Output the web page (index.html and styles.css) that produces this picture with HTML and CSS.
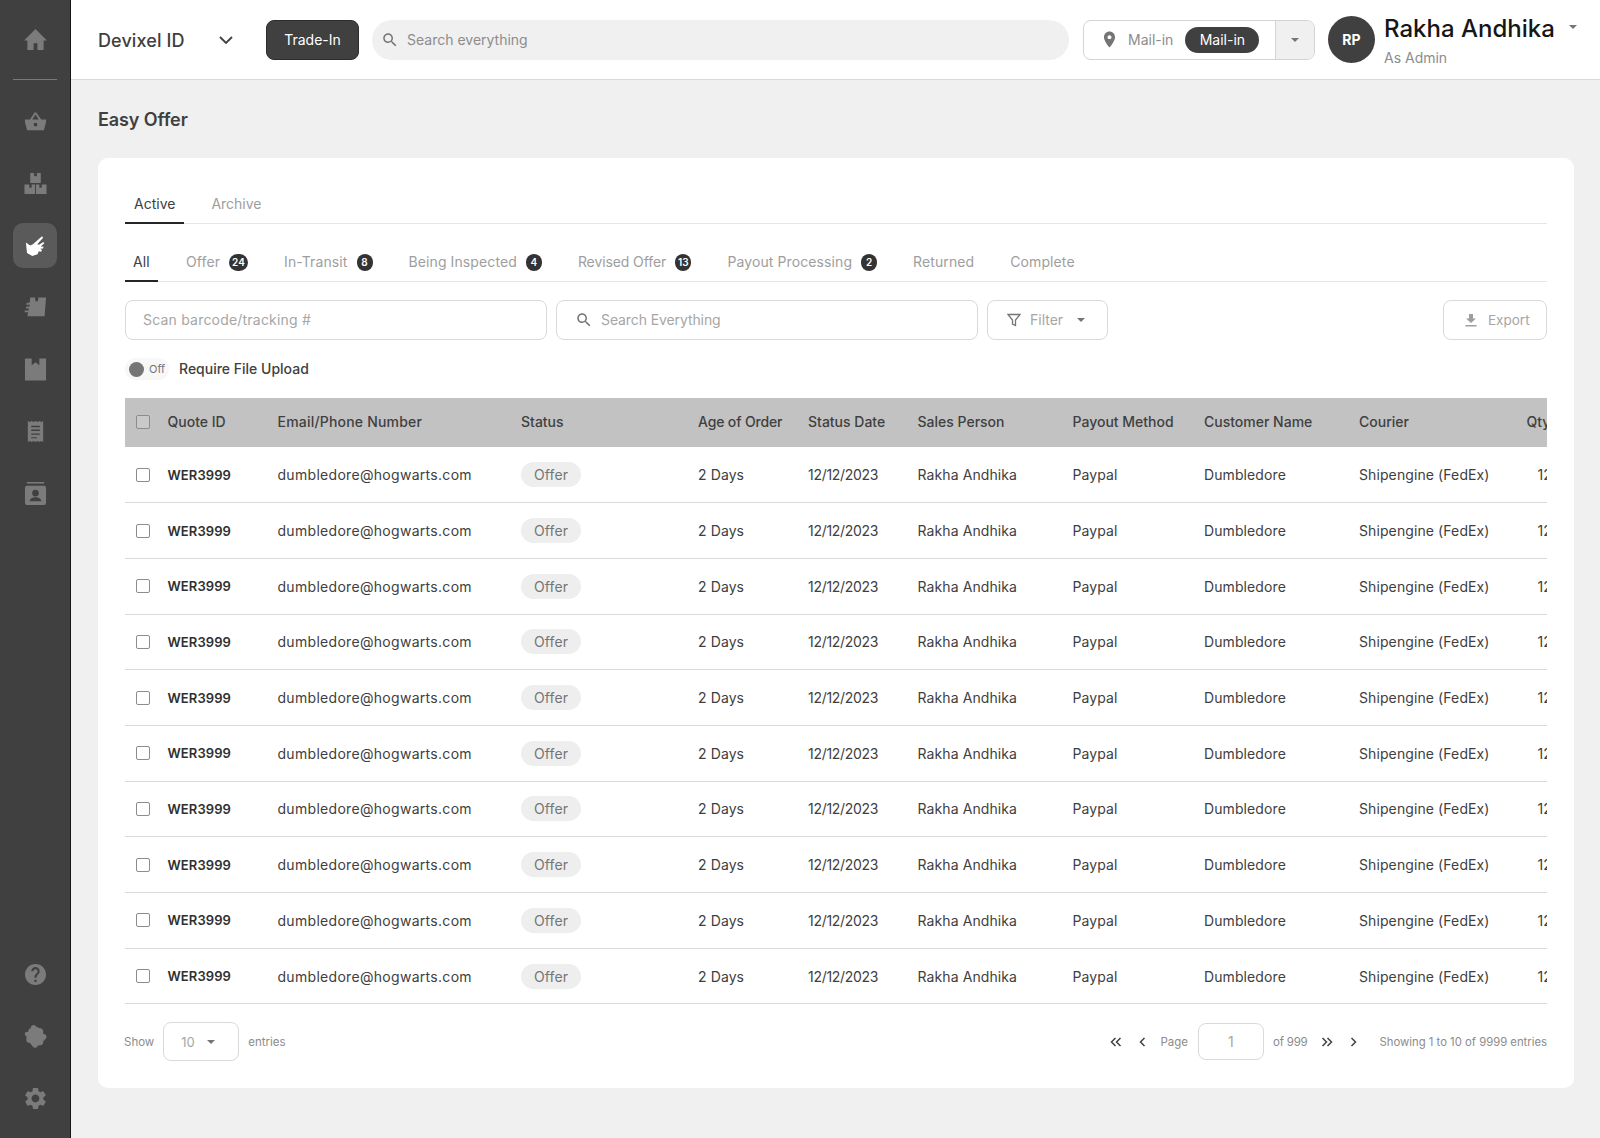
FILE: index.html
```html
<!DOCTYPE html>
<html lang="en">
<head>
    <meta charset="UTF-8">
    <meta name="viewport" content="width=device-width, initial-scale=1.0">
    <title>Easy Offer</title>
    <link rel="stylesheet" href="styles.css">
</head>
<body>
    <div class="shell">
        <!-- Sidebar -->
        <aside class="sidebar">
            <div class="home-item">
                <svg class="nav-icon" viewBox="0 0 24 24"><path d="M10 23v-7h4v7h6.500v-10H24L12 1 0 13h3.500v10z"/></svg>
            </div>
            <nav class="nav-main">
                <a class="nav-item"><svg class="nav-icon" viewBox="0 0 24 24"><path d="M1 10h5.200L11 2.500l1.800 0L18 10h5v2.500l-2.200 8.500H3.200L1 12.500zM8.600 10h6.800L12 4.600zM12 13.200a2 2 0 1 0 0 4 2 2 0 0 0 0-4z"/></svg></a>
                <a class="nav-item"><svg class="nav-icon" viewBox="0 0 24 24"><path d="M6.500 1h4v3.500h3V1h4v10.500h-11zM.5 13h5v3.500h2.500V13h3.500v10H.5zM12.500 13h3.500v3.500h2.500V13h5v10h-11z"/></svg></a>
                <a class="nav-item active"><svg class="nav-icon hand" viewBox="0 0 24 24"><path d="M1 8.500l5 3.500 3-1.500L19.500 1.500l1.200 1.500-6.700 7.500 2 .5 5-3 1 1.500-4 3.500 3.200.5-.5 1.800-3.200.5 2 1.500-1.200 1.700-2.500-.5-1.500 3.500-6 2-6-3.500z"/></svg></a>
                <a class="nav-item"><svg class="nav-icon" viewBox="0 0 24 24"><path d="M6.500 1.500h5l.5 4h2.500l.5-4h8L21.500 21H3.500l.8-4H.5l.4-2h3.800l.4-2H2l.4-2h3.300l.4-2H2.500l.4-2h3z"/></svg></a>
                <a class="nav-item"><svg class="nav-icon" viewBox="0 0 24 24"><path d="M1 .5h7v7l4-3 4 3v-7h7v23H1z"/></svg></a>
                <a class="nav-item"><svg class="nav-icon" viewBox="0 0 24 24"><path fill-rule="evenodd" d="M4 1l2 1 2-1 2 1 2-1 2 1 2-1 2 1 2-1v22l-2-1-2 1-2-1-2 1-2-1-2 1-2-1-2 1zM7.500 6v1.500h9V6zM7.500 10v1.500h9V10zM7.500 14v1.500h9V14zM7.500 18v1h6v-1z"/></svg></a>
                <a class="nav-item"><svg class="nav-icon" viewBox="0 0 24 24"><path fill-rule="evenodd" d="M3 0h18v1.500H3zM3 4h18a2 2 0 0 1 2 2v16a2 2 0 0 1-2 2H3a2 2 0 0 1-2-2V6a2 2 0 0 1 2-2zm9 4a3.500 3.500 0 1 0 0 7 3.500 3.500 0 0 0 0-7zm-6 12h12c0-2.500-3-4-6-4s-6 1.500-6 4z"/></svg></a>
            </nav>
            <nav class="nav-bottom">
                <a class="nav-item"><svg class="nav-icon" viewBox="0 0 24 24"><path transform="translate(-1.200 -1.200) scale(1.100)" d="M12 2C6.480 2 2 6.480 2 12s4.480 10 10 10 10-4.480 10-10S17.520 2 12 2zm1 17h-2v-2h2v2zm2.070-7.750l-.9.920C13.450 12.900 13 13.500 13 15h-2v-.5c0-1.100.45-2.100 1.170-2.830l1.240-1.260c.37-.36.59-.86.59-1.410 0-1.100-.9-2-2-2s-2 .9-2 2H8c0-2.210 1.790-4 4-4s4 1.790 4 4c0 .88-.36 1.680-.93 2.250z"/></svg></a>
                <a class="nav-item"><svg class="nav-icon" viewBox="0 0 24 24"><path d="M7 3.500a3 3 0 0 1 5.500-2l4 2a3 3 0 0 1 3.500 3.500v2.500a3 3 0 0 1 3 4.500l-3 3a3 3 0 0 1-2.500 4l-3 .5a3 3 0 0 1-5 1.500L6 18.500a3 3 0 0 1-3.500-3.500v-3a3 3 0 0 1-1-4.500L4.500 7a3 3 0 0 1 2.500-3.500z"/></svg></a>
                <a class="nav-item"><svg class="nav-icon" viewBox="0 0 24 24"><path transform="translate(-1.700 -1.700) scale(1.140)" d="M19.140 12.940c.04-.3.06-.61.06-.94 0-.32-.02-.64-.07-.94l2.030-1.580c.18-.14.23-.41.12-.61l-1.920-3.320c-.12-.22-.37-.29-.59-.22l-2.390.96c-.5-.38-1.030-.7-1.620-.94l-.36-2.540c-.04-.24-.24-.41-.48-.41h-3.840c-.24 0-.43.17-.47.41l-.36 2.540c-.59.24-1.130.57-1.620.94l-2.390-.96c-.22-.08-.47 0-.59.22L2.740 8.870c-.12.21-.08.47.12.61l2.030 1.580c-.05.3-.09.63-.09.94s.02.64.07.94l-2.030 1.580c-.18.14-.23.41-.12.61l1.920 3.320c.12.22.37.29.59.22l2.390-.96c.5.38 1.030.7 1.620.94l.36 2.540c.05.24.24.41.48.41h3.840c.24 0 .44-.17.47-.41l.36-2.540c.59-.24 1.130-.56 1.620-.94l2.390.96c.22.08.47 0 .59-.22l1.920-3.320c.12-.22.07-.47-.12-.61l-2.010-1.580zM12 15.600c-1.980 0-3.600-1.620-3.600-3.600s1.620-3.600 3.600-3.600 3.600 1.620 3.600 3.600-1.620 3.600-3.600 3.600z"/></svg></a>
            </nav>
        </aside>

        <div class="content">
            <!-- Top bar -->
            <header class="topbar">
                <div class="org-select">
                    <span>Devixel ID</span>
                    <svg class="chevron" viewBox="0 0 14 8"><path d="M1 1l6 6 6-6"/></svg>
                </div>
                <button class="trade-btn">Trade-In</button>
                <div class="global-search">
                    <svg class="search-icon" viewBox="0 0 24 24"><path d="M15.500 14h-.79l-.28-.27C15.410 12.590 16 11.110 16 9.500 16 5.910 13.090 3 9.500 3S3 5.910 3 9.500 5.910 16 9.500 16c1.610 0 3.090-.59 4.230-1.570l.27.28v.79l5 4.990L20.490 19l-4.990-5zm-6 0C7.010 14 5 11.990 5 9.500S7.010 5 9.500 5 14 7.010 14 9.500 11.990 14 9.500 14z"/></svg>
                    <span>Search everything</span>
                </div>
                <div class="mail-select">
                    <div class="mail-main">
                        <svg class="pin" viewBox="0 0 24 24"><path d="M12 2C8.130 2 5 5.130 5 9c0 5.250 7 13 7 13s7-7.750 7-13c0-3.870-3.130-7-7-7zm0 9.500c-1.380 0-2.500-1.120-2.500-2.500s1.120-2.500 2.500-2.500 2.500 1.120 2.500 2.500-1.120 2.500-2.500 2.500z"/></svg>
                        <span class="mail-label">Mail-in</span>
                        <span class="mail-pill">Mail-in</span>
                    </div>
                    <div class="mail-caret"><i class="caret"></i></div>
                </div>
                <div class="avatar">RP</div>
                <div class="user">
                    <div class="user-name">Rakha Andhika</div>
                    <div class="user-role">As Admin</div>
                </div>
                <i class="caret user-caret"></i>
            </header>

            <main class="page">
                <h1 class="page-title">Easy Offer</h1>

                <section class="card">
                    <div class="tabs">
                        <a class="tab active">Active</a>
                        <a class="tab">Archive</a>
                    </div>

                    <div class="subtabs">
                        <a class="subtab active">All</a>
                        <a class="subtab">Offer <span class="count">24</span></a>
                        <a class="subtab">In-Transit <span class="count">8</span></a>
                        <a class="subtab">Being Inspected <span class="count">4</span></a>
                        <a class="subtab">Revised Offer <span class="count">13</span></a>
                        <a class="subtab">Payout Processing <span class="count">2</span></a>
                        <a class="subtab">Returned</a>
                        <a class="subtab">Complete</a>
                    </div>

                    <div class="filters">
                        <div class="field scan">Scan barcode/tracking #</div>
                        <div class="field with-icon">
                            <svg class="search-icon" viewBox="0 0 24 24"><path d="M15.500 14h-.79l-.28-.27C15.410 12.590 16 11.110 16 9.500 16 5.910 13.090 3 9.500 3S3 5.910 3 9.500 5.910 16 9.500 16c1.610 0 3.090-.59 4.230-1.570l.27.28v.79l5 4.990L20.490 19l-4.990-5zm-6 0C7.010 14 5 11.990 5 9.500S7.010 5 9.500 5 14 7.010 14 9.500 11.990 14 9.500 14z"/></svg>
                            Search Everything
                        </div>
                        <div class="filter-btn">
                            <svg class="funnel" viewBox="0 0 14 14"><path d="M1 1.500h12L8.500 7v5.500L5.500 11V7z"/></svg>
                            Filter
                            <i class="caret"></i>
                        </div>
                        <div class="export-btn">
                            <svg class="download" viewBox="0 0 14 14"><path d="M5 1h4v4.500h3L7 10 2 5.500h3zM1.500 12h11v1.500h-11z"/></svg>
                            Export
                        </div>
                    </div>

                    <div class="toggle-row">
                        <div class="toggle"><i class="knob"></i>Off</div>
                        <span>Require File Upload</span>
                    </div>

                    <div class="table-wrap">
                        <table class="orders">
                            <colgroup>
                                <col class="c-check"><col class="c-quote"><col class="c-email"><col class="c-status"><col class="c-age"><col class="c-date"><col class="c-sales"><col class="c-payout"><col class="c-customer"><col class="c-courier"><col class="c-qty">
                            </colgroup>
                            <thead>
                                <tr>
                                    <th><i class="check head-check"></i></th>
                                    <th>Quote ID</th>
                                    <th>Email/Phone Number</th>
                                    <th>Status</th>
                                    <th>Age of Order</th>
                                    <th>Status Date</th>
                                    <th>Sales Person</th>
                                    <th>Payout Method</th>
                                    <th>Customer Name</th>
                                    <th>Courier</th>
                                    <th>Qty</th>
                                </tr>
                            </thead>
                            <tbody>
                                <tr><td><i class="check"></i></td><td class="quote">WER3999</td><td>dumbledore@hogwarts.com</td><td><span class="pill">Offer</span></td><td>2 Days</td><td>12/12/2023</td><td>Rakha Andhika</td><td>Paypal</td><td>Dumbledore</td><td>Shipengine (FedEx)</td><td class="qty">12</td></tr>
                                <tr><td><i class="check"></i></td><td class="quote">WER3999</td><td>dumbledore@hogwarts.com</td><td><span class="pill">Offer</span></td><td>2 Days</td><td>12/12/2023</td><td>Rakha Andhika</td><td>Paypal</td><td>Dumbledore</td><td>Shipengine (FedEx)</td><td class="qty">12</td></tr>
                                <tr><td><i class="check"></i></td><td class="quote">WER3999</td><td>dumbledore@hogwarts.com</td><td><span class="pill">Offer</span></td><td>2 Days</td><td>12/12/2023</td><td>Rakha Andhika</td><td>Paypal</td><td>Dumbledore</td><td>Shipengine (FedEx)</td><td class="qty">12</td></tr>
                                <tr><td><i class="check"></i></td><td class="quote">WER3999</td><td>dumbledore@hogwarts.com</td><td><span class="pill">Offer</span></td><td>2 Days</td><td>12/12/2023</td><td>Rakha Andhika</td><td>Paypal</td><td>Dumbledore</td><td>Shipengine (FedEx)</td><td class="qty">12</td></tr>
                                <tr><td><i class="check"></i></td><td class="quote">WER3999</td><td>dumbledore@hogwarts.com</td><td><span class="pill">Offer</span></td><td>2 Days</td><td>12/12/2023</td><td>Rakha Andhika</td><td>Paypal</td><td>Dumbledore</td><td>Shipengine (FedEx)</td><td class="qty">12</td></tr>
                                <tr><td><i class="check"></i></td><td class="quote">WER3999</td><td>dumbledore@hogwarts.com</td><td><span class="pill">Offer</span></td><td>2 Days</td><td>12/12/2023</td><td>Rakha Andhika</td><td>Paypal</td><td>Dumbledore</td><td>Shipengine (FedEx)</td><td class="qty">12</td></tr>
                                <tr><td><i class="check"></i></td><td class="quote">WER3999</td><td>dumbledore@hogwarts.com</td><td><span class="pill">Offer</span></td><td>2 Days</td><td>12/12/2023</td><td>Rakha Andhika</td><td>Paypal</td><td>Dumbledore</td><td>Shipengine (FedEx)</td><td class="qty">12</td></tr>
                                <tr><td><i class="check"></i></td><td class="quote">WER3999</td><td>dumbledore@hogwarts.com</td><td><span class="pill">Offer</span></td><td>2 Days</td><td>12/12/2023</td><td>Rakha Andhika</td><td>Paypal</td><td>Dumbledore</td><td>Shipengine (FedEx)</td><td class="qty">12</td></tr>
                                <tr><td><i class="check"></i></td><td class="quote">WER3999</td><td>dumbledore@hogwarts.com</td><td><span class="pill">Offer</span></td><td>2 Days</td><td>12/12/2023</td><td>Rakha Andhika</td><td>Paypal</td><td>Dumbledore</td><td>Shipengine (FedEx)</td><td class="qty">12</td></tr>
                                <tr><td><i class="check"></i></td><td class="quote">WER3999</td><td>dumbledore@hogwarts.com</td><td><span class="pill">Offer</span></td><td>2 Days</td><td>12/12/2023</td><td>Rakha Andhika</td><td>Paypal</td><td>Dumbledore</td><td>Shipengine (FedEx)</td><td class="qty">12</td></tr>
                            </tbody>
                        </table>
                    </div>

                    <div class="table-footer">
                        <div class="show-entries">
                            <span>Show</span>
                            <div class="page-size">10 <i class="caret"></i></div>
                            <span>entries</span>
                        </div>
                        <div class="pager">
                            <svg class="pager-icon double" viewBox="0 0 12 10"><path d="M5.500 1L1.500 5l4 4M10.500 1l-4 4 4 4"/></svg>
                            <svg class="pager-icon single" viewBox="0 0 7 10"><path d="M5.500 1L1.500 5l4 4"/></svg>
                            <span class="page-label">Page</span>
                            <div class="page-input">1</div>
                            <span class="page-of">of 999</span>
                            <svg class="pager-icon double next" viewBox="0 0 12 10"><path d="M1.500 1l4 4-4 4M6.500 1l4 4-4 4"/></svg>
                            <svg class="pager-icon single next" viewBox="0 0 7 10"><path d="M1.500 1l4 4-4 4"/></svg>
                            <span class="page-info">Showing 1 to 10 of 9999 entries</span>
                        </div>
                    </div>
                </section>
            </main>
        </div>
    </div>
</body>
</html>
```

FILE: styles.css
```css
/* General Styles */
* {
    box-sizing: border-box;
}
body {
    margin: 0;
    font-family: Inter, "Open Sans", sans-serif;
    font-size: 13.5px;
    color: #404040;
    background-color: #f0f0f0;
}
.shell {
    display: flex;
    min-height: 100vh;
}
.content {
    flex: 1;
    min-width: 0;
}

/* Sidebar */
.sidebar {
    width: 71px;
    flex-shrink: 0;
    display: flex;
    flex-direction: column;
    background-color: #404040;
    border-right: 1px solid #161616;
    padding-bottom: 9px;
}
.home-item {
    height: 80px;
    margin: 0 13px;
    display: flex;
    align-items: center;
    justify-content: center;
    border-bottom: 1px solid #7a7a7a;
}
.nav-main {
    padding-top: 10px;
    flex: 1;
}
.nav-item {
    height: 62px;
    display: flex;
    align-items: center;
    justify-content: center;
}
.nav-icon {
    width: 23px;
    height: 23px;
    fill: #7b7b7b;
}
.nav-item.active {
    height: 45px;
    margin: 8.500px 13px;
    background-color: #5a5a5a;
    border-radius: 10px;
}
.nav-item.active .hand {
    fill: #fff;
    width: 21px;
    height: 21px;
}

/* Top bar */
.topbar {
    height: 80px;
    display: flex;
    align-items: center;
    padding: 0 23px 0 27px;
    background: #fff;
    border-bottom: 1px solid #d9d9d9;
}
.org-select {
    width: 168px;
    display: flex;
    align-items: center;
    justify-content: space-between;
    padding-right: 33px;
    font-size: 18px;
    font-weight: 500;
    letter-spacing: 0.1px;
}
.org-select span {
    padding-top: 2px;
}
.chevron {
    width: 14px;
    height: 8px;
    fill: none;
    stroke: #404040;
    stroke-width: 1.8;
}
.trade-btn {
    width: 93px;
    height: 40px;
    border: 1px solid #2c2c2c;
    border-radius: 8px;
    background: #404040;
    color: #fff;
    font-family: inherit;
    font-size: 14px;
}
.global-search {
    flex: 1;
    height: 40px;
    margin: 0 14px 0 13px;
    padding-left: 9px;
    display: flex;
    align-items: center;
    gap: 8px;
    background: #f0f0f0;
    border-radius: 20px;
    color: #8c8c8c;
    font-size: 14px;
}
.search-icon {
    width: 18px;
    height: 18px;
    fill: #757575;
}
.mail-select {
    width: 232px;
    height: 40px;
    display: flex;
    border: 1px solid #d4d4d4;
    border-radius: 8px;
    overflow: hidden;
}
.mail-main {
    flex: 1;
    display: flex;
    align-items: center;
    padding-left: 16px;
    font-size: 14px;
}
.pin {
    width: 19px;
    height: 19px;
    fill: #757575;
}
.mail-label {
    margin-left: 9px;
    color: #8c8c8c;
}
.mail-pill {
    margin-left: 12px;
    width: 74px;
    height: 26px;
    line-height: 26px;
    text-align: center;
    border-radius: 13px;
    background: #404040;
    color: #fff;
}
.mail-caret {
    width: 39px;
    display: flex;
    align-items: center;
    justify-content: center;
    background: #f0f0f0;
    border-left: 1px solid #d4d4d4;
}
.caret {
    display: inline-block;
    width: 0;
    height: 0;
    border-left: 4px solid transparent;
    border-right: 4px solid transparent;
    border-top: 4px solid #757575;
}
.avatar {
    width: 47px;
    height: 47px;
    margin-left: 13px;
    border-radius: 50%;
    background: #404040;
    color: #fff;
    font-weight: 700;
    font-size: 14px;
    display: flex;
    align-items: center;
    justify-content: center;
}
.user {
    width: 185px;
    margin-left: 9px;
}
.user-name {
    font-size: 24px;
    font-weight: 500;
    color: #161616;
    line-height: 32px;
    white-space: nowrap;
}
.user-role {
    font-size: 14px;
    color: #8c8c8c;
    margin-top: 4px;
}
.user-caret {
    margin-top: -25px;
}

/* Page */
.page {
    padding: 26px 26px 0 27px;
}
.page-title {
    margin: 0 0 24px;
    font-size: 18px;
    line-height: 28px;
    font-weight: 600;
    letter-spacing: -0.1px;
}
.card {
    height: 930px;
    padding: 27px;
    background: #fff;
    border-radius: 10px;
}
.tabs {
    display: flex;
    gap: 18px;
    height: 39px;
    border-bottom: 1px solid #e6e6e6;
}
.tab {
    padding: 0 9px;
    line-height: 38px;
    font-size: 14px;
    color: #9e9e9e;
    margin-bottom: -1px;
}
.tab.active {
    color: #404040;
    border-bottom: 2px solid #262626;
}
.subtabs {
    display: flex;
    gap: 20px;
    height: 38px;
    margin-top: 20px;
    border-bottom: 1px solid #e6e6e6;
    letter-spacing: 0.1px;
}
.subtab {
    padding: 0 8px;
    line-height: 36px;
    font-size: 14px;
    color: #9e9e9e;
    margin-bottom: -1px;
    white-space: nowrap;
}
.subtab:nth-child(5) {
    letter-spacing: -0.1px;
}
.subtab.active {
    min-width: 33px;
    color: #404040;
    border-bottom: 2px solid #262626;
}
.count {
    display: inline-block;
    min-width: 16px;
    height: 17px;
    margin-left: 5px;
    padding: 0 3px;
    line-height: 17px;
    text-align: center;
    border-radius: 9px;
    background: #333;
    color: #fff;
    font-size: 10px;
    font-weight: 600;
    vertical-align: 1px;
}

/* Filters */
.filters {
    display: flex;
    gap: 9px;
    margin-top: 18px;
    height: 40px;
    color: #a6a6a6;
    font-size: 14px;
}
.field, .filter-btn, .export-btn {
    display: flex;
    align-items: center;
    border: 1px solid #d9d9d9;
    border-radius: 8px;
    padding-bottom: 1px;
}
.field {
    width: 422px;
    padding-left: 17px;
}
.field.scan {
    letter-spacing: 0.2px;
}
.field.with-icon {
    gap: 8px;
    padding-left: 18px;
    letter-spacing: -0.1px;
}
.filter-btn {
    width: 121px;
    padding-left: 19px;
    gap: 9px;
}
.filter-btn .caret {
    margin-left: 5px;
}
.funnel {
    width: 14px;
    height: 14px;
    fill: none;
    stroke: #757575;
    stroke-width: 1.3;
}
.export-btn {
    width: 104px;
    margin-left: auto;
    padding-left: 20px;
    gap: 10px;
    font-size: 13.500px;
}
.download {
    width: 14px;
    height: 14px;
    fill: #9e9e9e;
}
.toggle-row {
    display: flex;
    align-items: center;
    gap: 10px;
    height: 28px;
    margin-top: 15px;
    font-weight: 500;
    font-size: 14px;
}
.toggle-row span {
    padding-bottom: 2px;
}
.toggle {
    width: 44px;
    height: 22px;
    display: flex;
    align-items: center;
    gap: 5px;
    padding-left: 4px;
    border-radius: 11px;
    background: #f7f7f7;
    color: #757575;
    font-size: 11px;
    font-weight: 400;
}
.knob {
    width: 15px;
    height: 15px;
    border-radius: 50%;
    background: #757575;
}

/* Table */
.table-wrap {
    margin-top: 15px;
    overflow: hidden;
}
.orders {
    table-layout: fixed;
    width: 1522px;
    border-collapse: collapse;
}
.c-check { width: 42.5px; }
.c-quote { width: 110px; }
.c-email { width: 243.5px; }
.c-status { width: 177px; }
.c-age { width: 110px; }
.c-date { width: 109.5px; }
.c-sales { width: 155px; }
.c-payout { width: 131.5px; }
.c-customer { width: 155px; }
.c-courier { width: 167.5px; }
.c-qty { width: 120.5px; }
.orders th {
    height: 49px;
    padding: 0 0 2px;
    background: #c2c2c2;
    text-align: left;
    font-size: 14px;
    font-weight: 500;
    white-space: nowrap;
}
.orders th:nth-child(3) {
    letter-spacing: 0.2px;
}
.orders th:nth-child(5) {
    letter-spacing: -0.15px;
}
.orders td {
    height: 55.700px;
    padding: 0;
    border-bottom: 1px solid #d9d9d9;
    white-space: nowrap;
    font-size: 14px;
    letter-spacing: 0.1px;
    color: #404040;
}
.orders td:nth-child(3) {
    letter-spacing: 0.3px;
}
.orders td:nth-child(6) {
    letter-spacing: -0.3px;
}
.orders td.quote {
    font-weight: 600;
    font-size: 13px;
    color: #303030;
}
.orders td.qty {
    padding-left: 11px;
}
.check {
    display: block;
    width: 14px;
    height: 14px;
    margin-left: 11px;
    border: 1.5px solid #8c8c8c;
    border-radius: 2px;
    background: #fff;
}
.head-check {
    background: #c9c9c9;
}
.pill {
    display: inline-block;
    width: 60px;
    height: 25px;
    line-height: 25px;
    text-align: center;
    border-radius: 13px;
    background: #eee;
    color: #757575;
}

/* Footer */
.table-footer {
    display: flex;
    justify-content: space-between;
    align-items: center;
    height: 39px;
    margin-top: 18px;
    font-size: 11.5px;
    color: #8c8c8c;
}
.show-entries, .pager {
    display: flex;
    align-items: center;
}
.show-entries {
    margin-left: -1px;
}
.page-size {
    width: 76px;
    height: 39px;
    margin: 0 9px;
    padding: 0 23px 0 17px;
    display: flex;
    align-items: center;
    justify-content: space-between;
    border: 1px solid #d9d9d9;
    border-radius: 8px;
    color: #a6a6a6;
    font-size: 13px;
}
.pager-icon {
    height: 10px;
    fill: none;
    stroke: #404040;
    stroke-width: 1.5;
}
.pager-icon.double {
    width: 12px;
}
.pager-icon.single {
    width: 7px;
    margin-left: 17px;
}
.pager-icon.double.next {
    margin-left: 13px;
}
.page-label {
    margin-left: 14px;
}
.page-input {
    width: 66px;
    height: 37px;
    margin: 0 9px 0 10px;
    line-height: 35px;
    text-align: center;
    border: 1px solid #d9d9d9;
    border-radius: 8px;
    color: #a6a6a6;
    font-size: 14px;
}
.page-of {
    letter-spacing: -0.2px;
}
.page-info {
    margin-left: 23px;
    font-size: 11.300px;
}
```
